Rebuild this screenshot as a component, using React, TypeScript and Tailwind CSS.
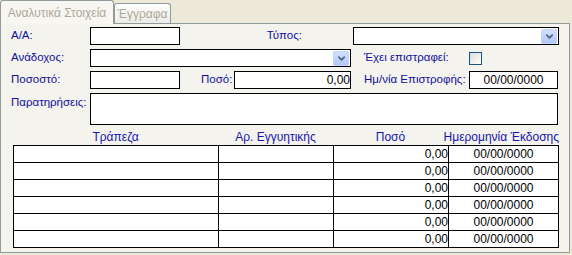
import { ChevronDown } from 'lucide-react'

const rows = [0, 1, 2, 3, 4, 5]

// XP-style combo box drop button
function DropButton() {
  return (
    <div className="w-[16px] h-[15px] mr-px rounded-[2px] bg-gradient-to-b from-[#D3E0FC] to-[#B2C7F7] border border-[#C3D3FD] flex items-center justify-center">
      <ChevronDown className="w-[11px] h-[11px] text-[#4D6185]" strokeWidth={3.5} />
    </div>
  )
}

function Select({ width }: { width: string }) {
  return (
    <div className={`${width} h-[18px] bg-white border border-black flex items-center justify-end`}>
      <DropButton />
    </div>
  )
}

export default function App() {
  return (
    <div className="w-[572px] h-[255px] bg-[#ECE9D8] text-[12px] leading-none whitespace-nowrap" style={{ fontFamily: '"Liberation Sans", Arial, sans-serif' }}>
      {/* Tabs */}
      <div className="flex items-end h-[23px]">
        <div className="relative z-10 w-[114px] h-[24px] -mb-px bg-[#F7F6F1] border border-b-0 border-[#919B9C] rounded-t-[3px] flex items-center justify-center text-[#ACA899] text-[12px]">
          Αναλυτικά Στοιχεία
        </div>
        <div className="w-[57px] h-[20px] bg-gradient-to-b from-[#FEFEFE] to-[#ECEBE6] border border-b-0 border-[#919B9C] rounded-t-[3px] flex items-center justify-center text-[#ACA899] text-[12px]">
          Έγγραφα
        </div>
      </div>

      {/* Panel */}
      <div className="w-[570px] h-[230px] bg-[#F4F3EE] border border-[#919B9C] pt-[3px] text-[#10109A]">
        <div className="text-[11.5px]">
          {/* Row 1 */}
          <div className="flex items-center h-[18px]">
            <span className="w-[89px] pl-[10px]">Α/Α:</span>
            <div className="w-[90px] h-[18px] bg-white border border-black" />
            <span className="w-[122px] text-right">Τύπος:</span>
            <div className="w-[51px]" />
            <Select width="w-[206px]" />
          </div>

          {/* Row 2 */}
          <div className="flex items-center h-[18px] mt-[4px]">
            <span className="w-[89px] pl-[10px]">Ανάδοχος:</span>
            <Select width="w-[261px]" />
            <span className="w-[118px] pl-[13px]">Έχει επιστραφεί:</span>
            <div className="w-[13px] h-[13px] border border-[#1C5180] bg-gradient-to-br from-[#DCDCD7] to-white" />
          </div>

          {/* Row 3 */}
          <div className="flex items-center h-[18px] mt-[4px]">
            <span className="w-[89px] pl-[10px]">Ποσοστό:</span>
            <div className="w-[90px] h-[18px] bg-white border border-black" />
            <span className="w-[54px] pl-[21px]">Ποσό:</span>
            <div className="w-[117px] h-[18px] bg-white border border-black flex items-center justify-end text-black text-[12px]">0,00</div>
            <span className="w-[118px] pl-[13px]">Ημ/νία Επιστροφής:</span>
            <div className="w-[89px] h-[18px] bg-white border border-black flex items-center justify-center text-black text-[12px]">00/00/0000</div>
          </div>

          {/* Row 4 */}
          <div className="flex items-start mt-[4px]">
            <span className="w-[89px] pl-[10px] pt-[4px]">Παρατηρήσεις:</span>
            <div className="w-[468px] h-[32px] bg-white border border-black" />
          </div>
        </div>

        {/* Grid header */}
        <div className="flex h-[17px] mt-[3px] ml-[12px] items-center text-[#1515B0]">
          <span className="w-[205px] text-center">Τράπεζα</span>
          <span className="w-[115px] text-center">Αρ. Εγγυητικής</span>
          <span className="w-[115px] text-center">Ποσό</span>
          <span className="w-[111px] flex justify-end">Ημερομηνία Έκδοσης</span>
        </div>

        {/* Grid */}
        <div className="ml-[12px] w-[546px] border-l border-t border-black text-black">
          {rows.map((r) => (
            <div key={r} className="flex h-[17px]">
              <div className="w-[205px] border-r border-b border-black bg-white" />
              <div className="w-[115px] border-r border-b border-black bg-white" />
              <div className="w-[115px] border-r border-b border-black bg-white flex items-center justify-end">0,00</div>
              <div className="w-[110px] border-r border-b border-black bg-white flex items-center justify-center">00/00/0000</div>
            </div>
          ))}
        </div>
      </div>
    </div>
  )
}
